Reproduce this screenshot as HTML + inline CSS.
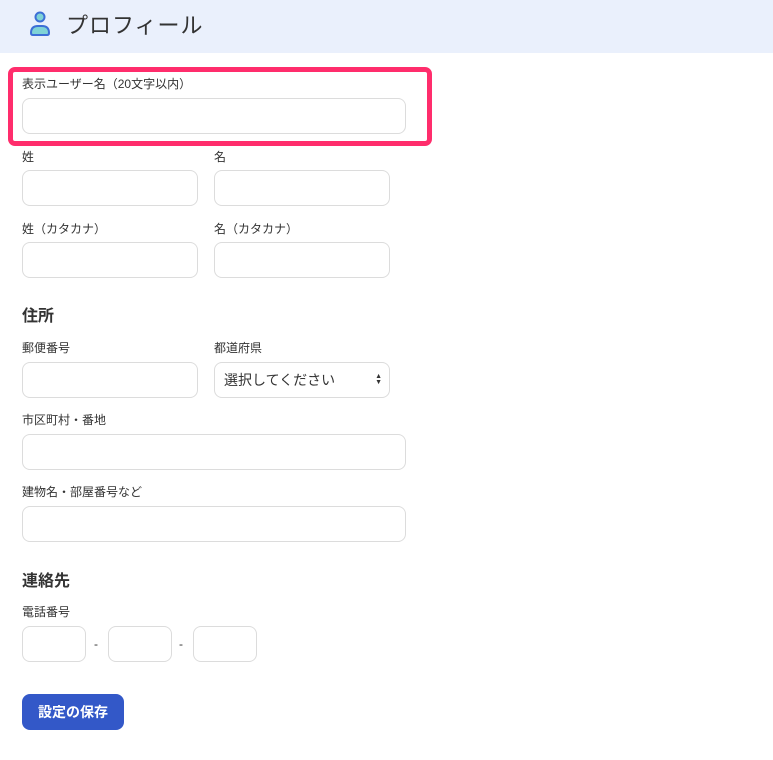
<!DOCTYPE html>
<html><head><meta charset="utf-8"><style>
*{box-sizing:border-box;margin:0;padding:0}
body{width:773px;height:760px;background:#fff;font-family:"Liberation Sans","Noto Sans CJK JP",sans-serif;color:#333;position:relative;overflow:hidden}
.a{position:absolute}
.hdr{left:0;top:0;width:773px;height:53px;background:#eaf0fc}
.t{font-size:22px;color:#333;left:66px;top:8px;letter-spacing:1px}
.lb{font-size:12px;color:#333;line-height:16px}
.in{border:1px solid #dcdcdc;border-radius:8px;height:36px;background:#fff}
.h{font-size:16px;font-weight:bold;color:#333}
.pink{left:8px;top:67px;width:424px;height:79px;border:5px solid #ff2d6c;border-radius:7px}
.btn{left:22px;top:694px;width:102px;height:36px;background:#3358c8;border-radius:8px;color:#fff;font-weight:bold;font-size:14px;text-align:center;line-height:36px}
</style></head><body>
<div class="a hdr"></div>
<svg class="a" style="left:27px;top:10px" width="26" height="28" viewBox="0 0 26 28">
<circle cx="13" cy="7" r="4.5" fill="#7fd3d6" stroke="#3d6fd6" stroke-width="2"/>
<path d="M4 23 Q4 16 11 16 L15 16 Q22 16 22 23 Q22 25 20 25 L6 25 Q4 25 4 23 Z" fill="#7fd3d6" stroke="#3d6fd6" stroke-width="2" stroke-linejoin="round"/>
</svg>
<div class="a t">プロフィール</div>
<div class="a pink"></div>
<div class="a lb" style="left:22px;top:76px">表示ユーザー名（20文字以内）</div>
<div class="a in" style="left:22px;top:98px;width:384px"></div>
<div class="a lb" style="left:22px;top:149px">姓</div>
<div class="a lb" style="left:214px;top:149px">名</div>
<div class="a in" style="left:22px;top:170px;width:176px"></div>
<div class="a in" style="left:214px;top:170px;width:176px"></div>
<div class="a lb" style="left:22px;top:221px">姓（カタカナ）</div>
<div class="a lb" style="left:214px;top:221px">名（カタカナ）</div>
<div class="a in" style="left:22px;top:242px;width:176px"></div>
<div class="a in" style="left:214px;top:242px;width:176px"></div>
<div class="a h" style="left:22px;top:302px">住所</div>
<div class="a lb" style="left:22px;top:340px">郵便番号</div>
<div class="a lb" style="left:214px;top:340px">都道府県</div>
<div class="a in" style="left:22px;top:362px;width:176px"></div>
<div class="a in" style="left:214px;top:362px;width:176px;font-size:14px;line-height:34px;padding-left:9px;color:#333">選択してください<span style="position:absolute;right:7px;top:11px;font-size:7px;line-height:6px;text-align:center">▲<br>▼</span></div>
<div class="a lb" style="left:22px;top:412px">市区町村・番地</div>
<div class="a in" style="left:22px;top:434px;width:384px"></div>
<div class="a lb" style="left:22px;top:484px">建物名・部屋番号など</div>
<div class="a in" style="left:22px;top:506px;width:384px"></div>
<div class="a h" style="left:22px;top:567px">連絡先</div>
<div class="a lb" style="left:22px;top:604px">電話番号</div>
<div class="a in" style="left:22px;top:626px;width:64px"></div>
<div class="a lb" style="left:94px;top:636px">-</div>
<div class="a in" style="left:108px;top:626px;width:64px"></div>
<div class="a lb" style="left:179px;top:636px">-</div>
<div class="a in" style="left:193px;top:626px;width:64px"></div>
<div class="a btn">設定の保存</div>
</body></html>
